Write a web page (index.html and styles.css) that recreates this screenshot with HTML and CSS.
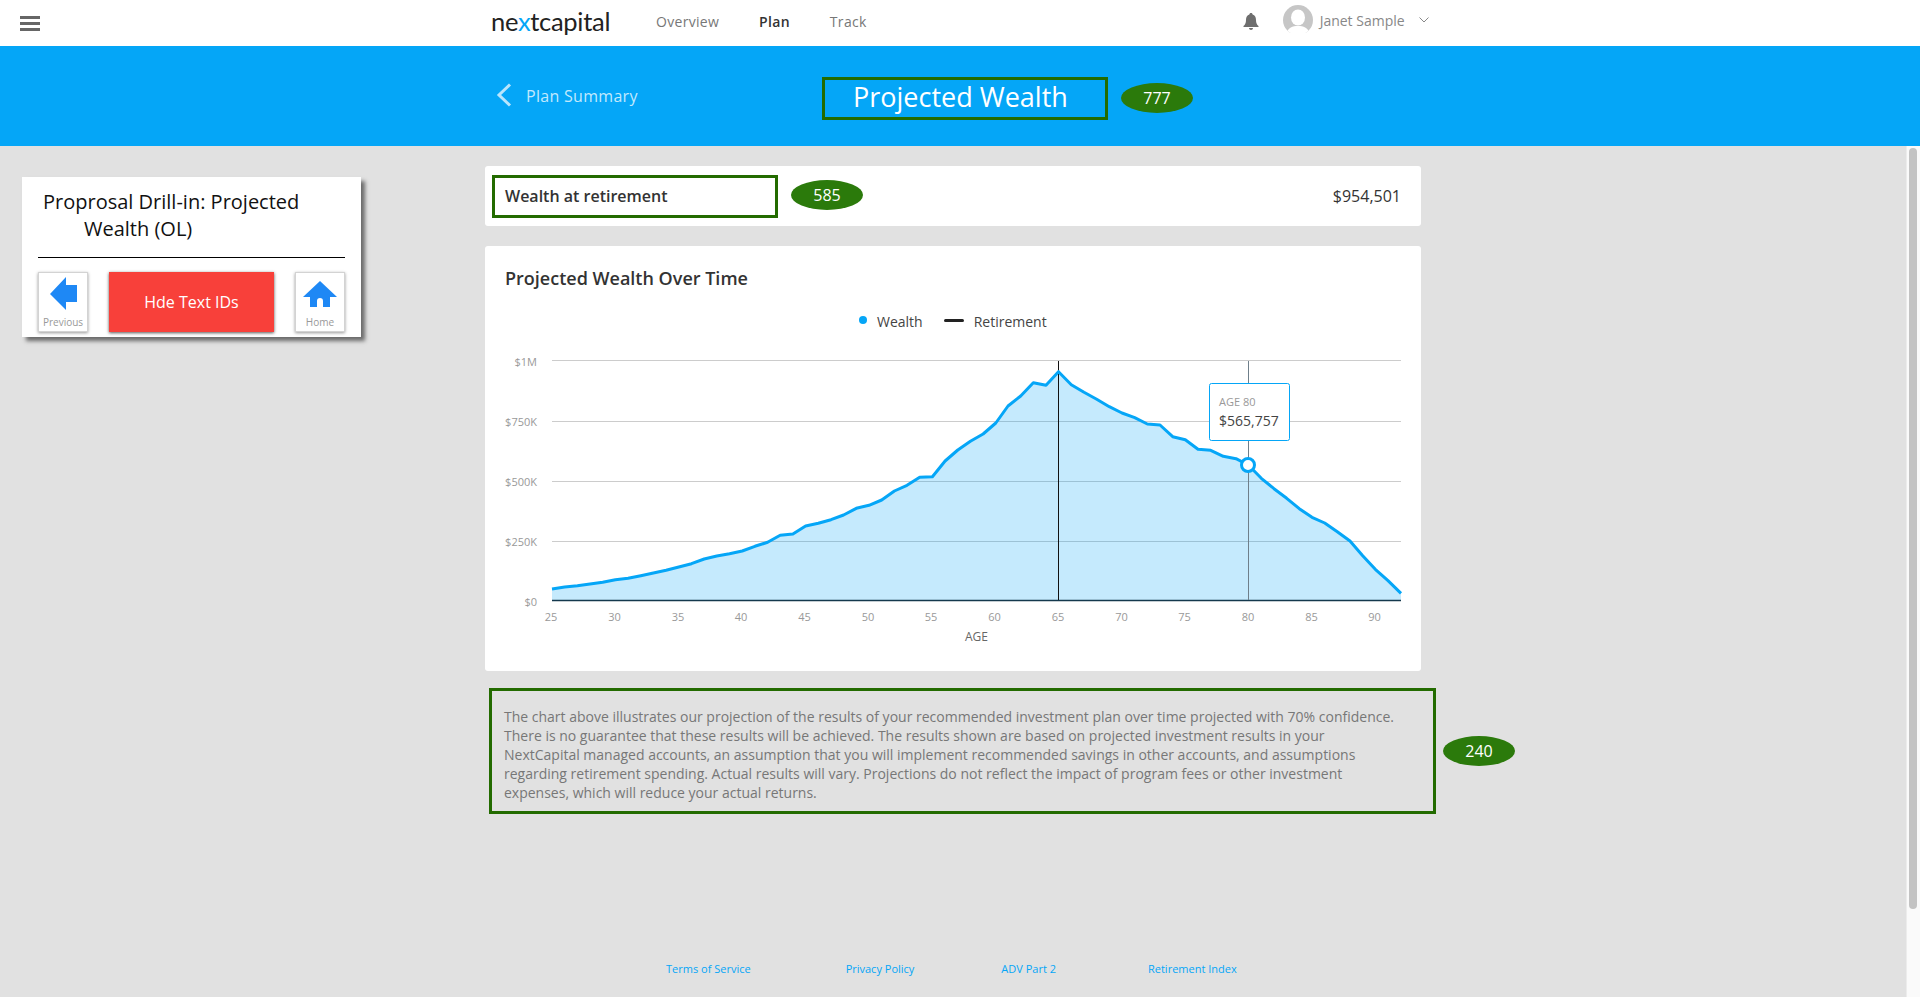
FILE: index.html
```html
<!DOCTYPE html>
<html lang="en">
<head>
<meta charset="utf-8">
<title>Projected Wealth</title>
<link rel="stylesheet" href="styles.css">
</head>
<body>
<div class="app">
  <header class="topbar">
    <svg class="burger" width="20" height="15" viewBox="0 0 20 15"><path d="M0 1.5h20M0 7.5h20M0 13.5h20" stroke="#666" stroke-width="3"/></svg>
    <div class="logo">ne<span class="logo-x">x</span>tcapital</div>
    <nav class="nav">
      <a class="nav-link">Overview</a>
      <a class="nav-link active">Plan</a>
      <a class="nav-link">Track</a>
    </nav>
    <svg class="bell" width="16" height="17" viewBox="0 0 16 17"><path d="M8 0c1 0 1.600.7 1.600 1.600C12 2.400 13 4.500 13 7c0 3 .8 4.600 2.500 6v1H.5v-1C2.200 11.600 3 10 3 7c0-2.500 1-4.600 3.400-5.400C6.400.7 7 0 8 0zM6 15h4c0 1.200-1 2-2 2s-2-.8-2-2z" fill="#6e6e6e"/></svg>
    <svg class="avatar" width="30" height="28" viewBox="0 0 30 28"><defs><clipPath id="av"><ellipse cx="15" cy="15" rx="15" ry="15"/></clipPath></defs><g clip-path="url(#av)"><rect width="30" height="30" fill="#c6c6c6"/><ellipse cx="15" cy="12.500" rx="7" ry="8" fill="#fff"/><path d="M3 30c1-7 6-9 12-9s11 2 12 9z" fill="#fff"/></g></svg>
    <span class="user">Janet Sample</span>
    <svg class="caret" width="10" height="6" viewBox="0 0 10 6"><path d="M.5.5 5 5 9.500.5" fill="none" stroke="#888" stroke-width="1"/></svg>
  </header>

  <section class="band">
    <svg class="back" width="16" height="24" viewBox="0 0 16 24"><path d="M14 1.500 3 12l11 10.500" fill="none" stroke="#b9e5fc" stroke-width="3"/></svg>
    <span class="back-label">Plan Summary</span>
    <h1 class="page-title">Projected Wealth</h1>
    <span class="badge badge-777">777</span>
  </section>

  <div class="body">
    <aside class="side">
      <div class="panel">
        <div class="panel-title">Proprosal Drill-in: Projected<span class="panel-title-2">Wealth (OL)</span></div>
        <div class="panel-rule"></div>
        <div class="panel-actions">
          <div class="tile tile-prev">
            <svg width="28" height="34" viewBox="0 0 28 34"><path d="M1 17 17 0v8h11v17H17v8z" fill="#1e88f5"/></svg>
            <span class="tile-label">Previous</span>
          </div>
          <div class="red-btn">Hde Text IDs</div>
          <div class="tile tile-home">
            <svg width="34" height="27" viewBox="0 0 34 27"><path d="M17 0 34 16h-7v10H20v-6a3 3 0 0 0-6 0v6H7V16H0z" fill="#1e88f5"/></svg>
            <span class="tile-label">Home</span>
          </div>
        </div>
      </div>
    </aside>

    <main class="center">
      <div class="card wealth-card">
        <div class="wealth-label">Wealth at retirement</div>
        <span class="badge badge-585">585</span>
        <div class="wealth-value">$954,501</div>
      </div>

      <div class="card chart-card">
        <h2 class="chart-title">Projected Wealth Over Time</h2>
        <div class="legend">
          <span class="legend-dot"></span><span class="legend-text">Wealth</span>
          <span class="legend-line"></span><span class="legend-text">Retirement</span>
        </div>
        <svg class="chart" width="936" height="340" viewBox="485 331 936 340">
          <g class="grid">
            <path d="M552 360.500H1401M552 421.500H1401M552 481.500H1401M552 541.500H1401"/>
          </g>
          <path class="area" d="M552 589 564.700 587 577.400 585.700 590 584 602.700 582.300 615.400 579.700 628.100 578.300 640.800 575.700 653.400 573 666.100 570.300 678.800 567 691.500 563.700 704.200 559 716.800 556 729.500 553.700 742.200 551 754.900 546.300 767.600 542.300 780.200 535.300 792.900 534 805.600 526 818.300 523.300 831 519.700 843.600 515 856.300 508.300 869 505.300 881.700 500 894.400 491 907 485.300 919.700 477.300 932.400 476.700 945.100 461 957.800 450 970.400 441.300 983.100 434 995.800 423 1008 406 1020.700 396 1033.300 382.700 1046 385.300 1058.500 371.700 1071.300 384.700 1084 392.300 1096.700 399.300 1109.300 406.700 1122 413 1134.700 417.700 1147.300 424 1160 425 1172.700 436.700 1185.300 439.700 1198 449.300 1210.700 450.300 1223.300 456.300 1236 458.700 1248.300 465 1261.300 478.300 1274 488.700 1286.700 498.300 1299.300 508.700 1312 517.300 1324.700 523 1337.300 531.700 1350 541 1362.700 555.700 1375.300 569.300 1388 580.700 1401 593.300V600.500H552z"/>
          <path class="axis" d="M552 600.500H1401"/>
          <path class="ret-line" d="M1058.500 361V600"/>
          <path class="age-line" d="M1248.500 361V600"/>
          <polyline class="curve" points="552 589 564.700 587 577.400 585.700 590 584 602.700 582.300 615.400 579.700 628.100 578.300 640.800 575.700 653.400 573 666.100 570.300 678.800 567 691.500 563.700 704.200 559 716.800 556 729.500 553.700 742.200 551 754.900 546.300 767.600 542.300 780.200 535.300 792.900 534 805.600 526 818.300 523.300 831 519.700 843.600 515 856.300 508.300 869 505.300 881.700 500 894.400 491 907 485.300 919.700 477.300 932.400 476.700 945.100 461 957.800 450 970.400 441.300 983.100 434 995.800 423 1008 406 1020.700 396 1033.300 382.700 1046 385.300 1058.500 371.700 1071.300 384.700 1084 392.300 1096.700 399.300 1109.300 406.700 1122 413 1134.700 417.700 1147.300 424 1160 425 1172.700 436.700 1185.300 439.700 1198 449.300 1210.700 450.300 1223.300 456.300 1236 458.700 1248.300 465 1261.300 478.300 1274 488.700 1286.700 498.300 1299.300 508.700 1312 517.300 1324.700 523 1337.300 531.700 1350 541 1362.700 555.700 1375.300 569.300 1388 580.700 1401 593.300"/>
          <circle class="marker" cx="1248" cy="465" r="6.500"/>
          <g class="y-labels">
            <text x="537" y="366">$1M</text>
            <text x="537" y="426">$750K</text>
            <text x="537" y="486">$500K</text>
            <text x="537" y="546">$250K</text>
            <text x="537" y="606">$0</text>
          </g>
          <g class="x-labels">
            <text x="551" y="621">25</text><text x="614.500" y="621">30</text><text x="678" y="621">35</text><text x="741" y="621">40</text><text x="804.500" y="621">45</text><text x="868" y="621">50</text><text x="931" y="621">55</text><text x="994.500" y="621">60</text><text x="1058" y="621">65</text><text x="1121.500" y="621">70</text><text x="1184.500" y="621">75</text><text x="1248" y="621">80</text><text x="1311.500" y="621">85</text><text x="1374.500" y="621">90</text>
          </g>
          <text class="x-title" x="976.500" y="641">AGE</text>
          <rect class="tip" x="1209.500" y="383.500" width="80" height="57" rx="2"/>
          <text class="tip-age" x="1219" y="406">AGE 80</text>
          <text class="tip-val" x="1219" y="426">$565,757</text>
        </svg>
      </div>

      <div class="note-row">
        <p class="note">The chart above illustrates our projection of the results of your recommended investment plan over time projected with 70% confidence.<br>There is no guarantee that these results will be achieved. The results shown are based on projected investment results in your<br>NextCapital managed accounts, an assumption that you will implement recommended savings in other accounts, and assumptions<br>regarding retirement spending. Actual results will vary. Projections do not reflect the impact of program fees or other investment<br>expenses, which will reduce your actual returns.</p>
        <span class="badge badge-240">240</span>
      </div>

      <footer class="footer">
        <a class="foot-link foot-terms">Terms of Service</a>
        <a class="foot-link foot-privacy">Privacy Policy</a>
        <a class="foot-link foot-adv">ADV Part 2</a>
        <a class="foot-link foot-index">Retirement Index</a>
      </footer>
    </main>

    <div class="scrollbar"><div class="thumb"></div></div>
  </div>
</div>
</body>
</html>
```
FILE: styles.css
```css
* { box-sizing: border-box; }
html, body { margin: 0; height: 100%; background: #fff; overflow: hidden; }
body { font-family: "Open Sans", "Liberation Sans", sans-serif; color: #333; }
.app { width: 1920px; height: 997px; display: flex; flex-direction: column; background: #e1e1e1; }

.topbar { height: 46px; background: #fff; display: flex; align-items: center; flex: none; }
.burger { margin-left: 20px; flex: none; }
.logo { margin-left: 451px; width: 124px; font-family: "Lato", sans-serif; font-size: 25.500px; line-height: 30px; color: #222; letter-spacing: -0.3px; margin-top: -4px; white-space: nowrap; }
.logo-x { color: #05a6f7; }
.nav { display: flex; margin-left: 41px; margin-top: -2px; }
.nav-link { font-size: 14px; color: #777; margin-right: 40px; letter-spacing: 0.3px; line-height: 20px; }
.nav-link.active { color: #333; font-weight: 600; }
.bell { margin-left: 336px; margin-top: -4px; flex: none; }
.avatar { margin-left: 24px; margin-top: -9px; flex: none; }
.user { margin-left: 7px; font-size: 14px; color: #888; margin-top: -5px; white-space: nowrap; }
.caret { margin-left: 14px; margin-top: -6px; flex: none; }

.band { height: 100px; background: #05a6f7; display: flex; align-items: center; flex: none; }
.back { margin-left: 496px; margin-top: -2px; flex: none; }
.back-label { margin-left: 14px; font-size: 16px; color: #c2e9fd; letter-spacing: 0.3px; width: 296px; white-space: nowrap; margin-top: 0; }
.page-title { margin: 5px 0 0 0; width: 286px; height: 43px; flex: none; border: 3px solid #236b00; font-size: 27px; font-weight: 400; color: #fff; line-height: 34px; padding-left: 28px; white-space: nowrap; }

.badge { display: flex; align-items: center; justify-content: center; width: 72px; height: 30px; border-radius: 50%; background: #2b7a0b; color: #fff; font-size: 16px; flex: none; }
.badge-777 { margin-left: 13px; margin-top: 4px; }
.badge-585 { margin-left: 13px; margin-top: -2px; }
.badge-240 { margin-left: 7px; margin-top: 0; }

.body { flex: 1; display: flex; min-height: 0; }
.side { width: 485px; flex: none; padding: 31px 0 0 22px; }
.panel { width: 339px; height: 160px; background: #fff; box-shadow: 4px 4px 4px #6b6b6b; padding: 11px 16px 0; }
.panel-title { font-size: 20px; line-height: 27px; color: #111; padding-left: 5px; height: 69px; }
.panel-title-2 { display: block; padding-left: 41px; }
.panel-rule { height: 1px; background: #000; margin-bottom: 14px; }
.panel-actions { display: flex; justify-content: space-between; }
.tile { width: 50px; height: 60px; border: 1px solid #d3d3d3; box-shadow: 0 1px 3px #999; background: #fff; display: flex; flex-direction: column; align-items: center; justify-content: space-between; padding-bottom: 2px; }
.tile-prev { padding-top: 4px; }
.tile-home { padding-top: 8px; }
.tile svg { display: block; }
.tile-label { font-size: 10px; line-height: 14px; color: #999; }
.red-btn { width: 165px; height: 60px; background: #f8403a; color: #fff; font-size: 16px; display: flex; align-items: center; justify-content: center; box-shadow: 0 1px 3px #555; }

.center { width: 936px; flex: none; padding-top: 20px; display: flex; flex-direction: column; }
.card { background: #fff; border-radius: 3px; }
.wealth-card { height: 60px; display: flex; align-items: center; padding: 0 20px 0 7px; }
.wealth-label { width: 286px; height: 43px; border: 3px solid #236b00; font-size: 16px; font-weight: 600; color: #333; line-height: 37px; padding-left: 10px; }
.wealth-value { margin-left: auto; font-size: 16px; color: #333; }

.chart-card { margin-top: 20px; height: 425px; padding-top: 20px; }
.chart-title { margin: 0 0 0 20px; font-size: 18px; line-height: 24px; font-weight: 600; color: #333; }
.legend { display: flex; align-items: center; margin: 21px 0 0 374px; height: 20px; }
.legend-dot { width: 8px; height: 8px; border-radius: 50%; background: #05a6f7; margin-right: 10px; margin-top: -2px; }
.legend-line { width: 20px; height: 3px; background: #222; border-radius: 2px; margin: -1px 10px 0 21px; }
.legend-text { font-size: 14px; color: #444; }
.chart { display: block; }
.grid path { stroke: #ccc; stroke-width: 1; fill: none; }
.area { fill: #05a6f7; fill-opacity: 0.23; stroke: none; }
.axis { stroke: #14384d; stroke-width: 1.500; fill: none; }
.ret-line { stroke: #111; stroke-width: 1; fill: none; }
.age-line { stroke: #6f7f8a; stroke-width: 1; fill: none; }
.curve { fill: none; stroke: #05a6f7; stroke-width: 3; stroke-linejoin: round; }
.marker { fill: #fff; stroke: #05a6f7; stroke-width: 3; }
.y-labels text { font-size: 11px; fill: #999; text-anchor: end; }
.x-labels text { font-size: 11px; fill: #999; text-anchor: middle; }
.x-title { font-size: 12px; fill: #666; text-anchor: middle; }
.tip { fill: #fff; stroke: #05a6f7; stroke-width: 1; }
.tip-age { font-size: 11px; fill: #999; }
.tip-val { font-size: 14px; fill: #444; }

.note-row { display: flex; align-items: center; margin: 17px 0 0 4px; width: 1040px; }
.note { margin: 0; width: 947px; height: 126px; flex: none; border: 3px solid #236b00; padding: 16px 12px 0; font-size: 14px; line-height: 19px; color: #777; white-space: nowrap; }

.footer { margin-top: auto; padding: 0 0 20px 181px; display: flex; font-size: 11px; line-height: 16px; color: #05a6f7; }
.foot-link { white-space: nowrap; }
.foot-privacy { margin-left: 95px; }
.foot-adv { margin-left: 87px; }
.foot-index { margin-left: 92px; }

.scrollbar { flex: none; width: 14px; margin-left: auto; background: #fafafa; border-left: 1px solid #ececec; padding: 2px 3px 0 2px; }
.thumb { width: 8px; height: 761px; background: #c3c3c3; border-radius: 4px; }
```
